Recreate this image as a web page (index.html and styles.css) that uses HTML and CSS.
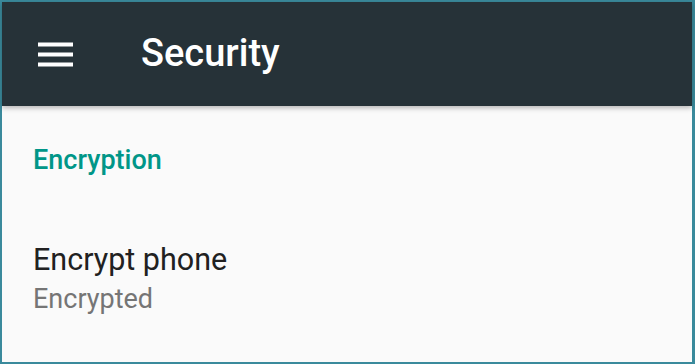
FILE: index.html
```html
<!DOCTYPE html>
<html>
<head>
<meta charset="utf-8">
<link rel="stylesheet" href="styles.css">
</head>
<body>
<div class="frame">
  <header class="toolbar">
    <div class="menu-icon">
      <svg width="36" height="25" viewBox="0 0 36 25"><rect x="0" y="0.5" width="35" height="4" fill="#fff"/><rect x="0" y="10.5" width="35" height="4" fill="#fff"/><rect x="0" y="20.5" width="35" height="4" fill="#fff"/></svg>
    </div>
    <h1 class="title">Security</h1>
  </header>
  <main class="content">
    <div class="category">Encryption</div>
    <div class="pref">
      <div class="pref-title">Encrypt phone</div>
      <div class="pref-summary">Encrypted</div>
    </div>
  </main>
</div>
</body>
</html>
```
FILE: styles.css
```css
html, body {
  margin: 0;
  padding: 0;
  width: 695px;
  height: 364px;
  overflow: hidden;
}
.frame {
  box-sizing: border-box;
  width: 695px;
  height: 364px;
  border: 2px solid #3a8a9c;
  border-right-width: 3px;
  background: #fafafa;
  font-family: Roboto, "Noto Sans", sans-serif;
  display: flex;
  flex-direction: column;
}
.toolbar {
  height: 104px;
  flex: none;
  background: #263238;
  display: flex;
  align-items: center;
  padding-left: 36px;
  box-shadow: 0 2px 5px rgba(0,0,0,0.28);
  position: relative;
  z-index: 1;
}
.menu-icon {
  width: 36px;
  height: 25px;
  display: flex;
}
.title {
  margin: 0 0 0 67px;
  color: #fff;
  font-size: 38px;
  font-weight: 500;
  line-height: 42px;
  position: relative;
  top: -1px;
}
.content {
  padding: 38px 0 0 31px;
}
.category {
  color: #009688;
  font-size: 27px;
  font-weight: 500;
  line-height: 32px;
}
.pref {
  margin-top: 65px;
}
.pref-title {
  color: #212121;
  font-size: 30.5px;
  line-height: 38px;
}
.pref-summary {
  color: #757575;
  font-size: 27px;
  line-height: 34px;
  margin-top: 3px;
}
```
